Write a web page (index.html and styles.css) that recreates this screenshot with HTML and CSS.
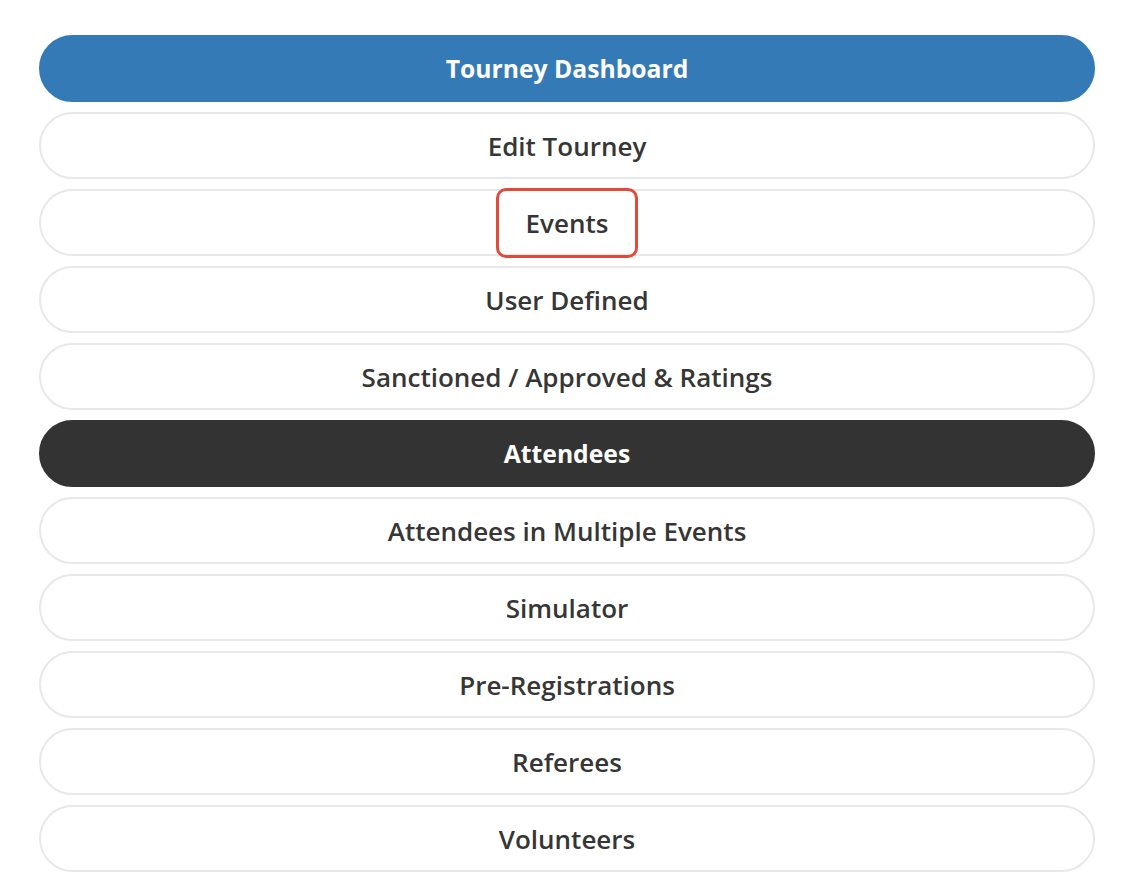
FILE: index.html
```html
<!DOCTYPE html>
<html lang="en">
<head>
<meta charset="utf-8">
<title>Tourney Menu</title>
<link rel="stylesheet" href="styles.css">
</head>
<body>
<nav class="menu">
  <a class="btn btn-primary">Tourney Dashboard</a>
  <a class="btn">Edit Tourney</a>
  <a class="btn"><span class="highlight">Events</span></a>
  <a class="btn">User Defined</a>
  <a class="btn">Sanctioned / Approved &amp; Ratings</a>
  <a class="btn btn-dark">Attendees</a>
  <a class="btn">Attendees in Multiple Events</a>
  <a class="btn">Simulator</a>
  <a class="btn">Pre-Registrations</a>
  <a class="btn">Referees</a>
  <a class="btn">Volunteers</a>
</nav>
</body>
</html>
```
FILE: styles.css
```css
html, body {
  margin: 0;
  padding: 0;
  background: #ffffff;
}
body {
  font-family: "Open Sans", "Noto Sans", "Liberation Sans", sans-serif;
}
.menu {
  display: flex;
  flex-direction: column;
  gap: 10px;
  width: 1056px;
  padding: 35px 0 0 39px;
}
.btn {
  box-sizing: border-box;
  height: 67px;
  display: flex;
  align-items: center;
  justify-content: center;
  border: 2px solid #e7e8ea;
  border-radius: 34px;
  background: #fff;
  color: #363636;
  font-size: 26px;
  font-weight: 600;
  text-decoration: none;
}
.btn-primary {
  background: #337ab7;
  border-color: #337ab7;
  color: #fff;
  font-size: 24.7px;
  font-weight: 700;
}
.btn-dark {
  background: #333333;
  border-color: #333333;
  color: #fff;
  font-size: 24.7px;
  font-weight: 700;
}
.highlight {
  position: relative;
}
.highlight::after {
  content: "";
  position: absolute;
  left: 50%;
  top: 50%;
  width: 142px;
  height: 70px;
  transform: translate(-50%, -50%);
  box-sizing: border-box;
  border: 3px solid #e04b3a;
  border-radius: 10px;
}
```
